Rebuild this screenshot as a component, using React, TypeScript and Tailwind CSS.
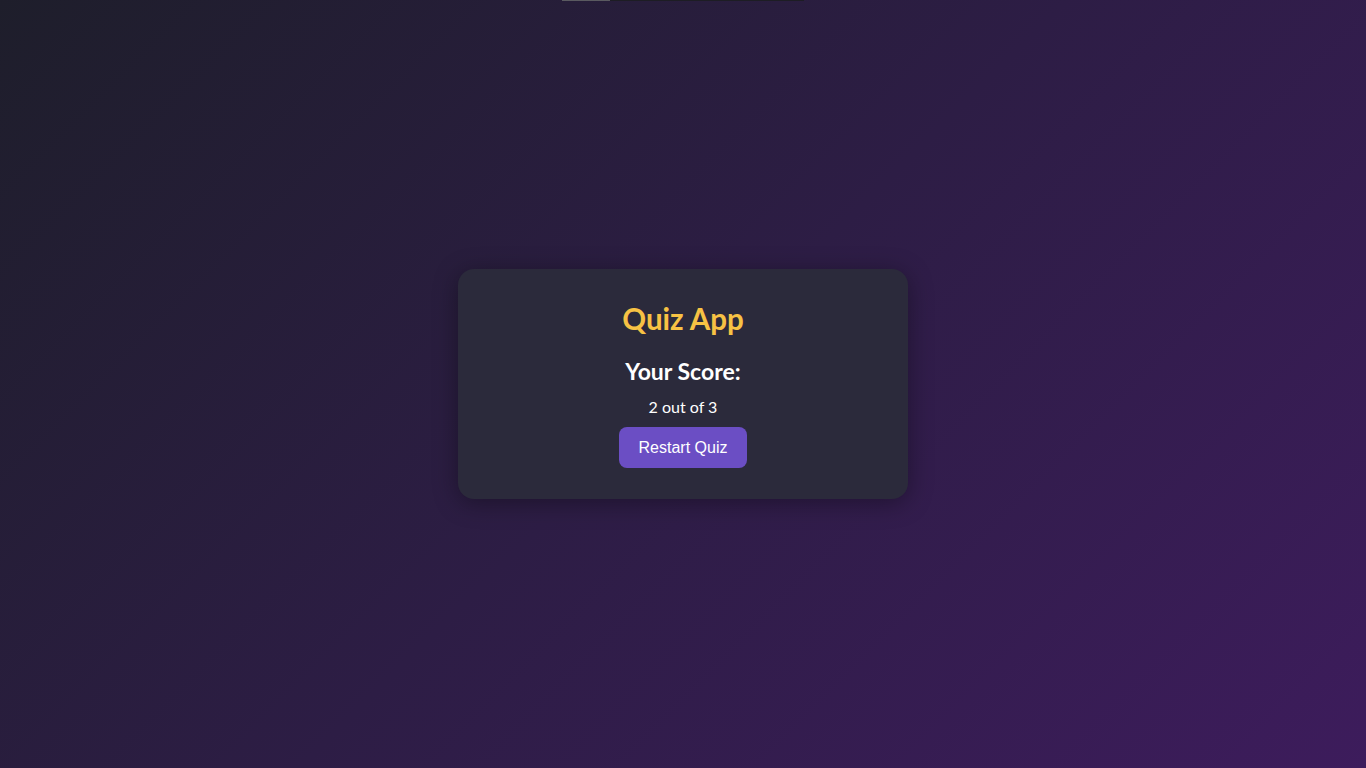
export default function App() {
  return (
    <div className="min-h-screen w-full bg-[linear-gradient(135deg,#1e1e2b_0%,#2d1d45_50%,#3d1c5c_100%)] flex flex-col font-['Segoe_UI','Lato','Noto_Sans',sans-serif]">
      <div className="w-full flex justify-center">
        <div className="w-[242px] h-px bg-[#1d1d24] flex">
          <div className="w-[48px] h-px bg-[#5a5a60]" />
        </div>
      </div>

      <div className="flex-1 -mt-px flex items-center justify-center">
        <div className="w-[450px] rounded-2xl bg-[#2b2a3b] shadow-[0_4px_24px_rgba(0,0,0,0.35)] px-8 pt-[29px] pb-[31px] flex flex-col items-center">
          <h1 className="text-[29.5px] leading-[42px] font-bold text-[#f7c244]">
            Quiz App
          </h1>
          <h2 className="mt-[15px] text-[23px] leading-[33px] font-bold text-white">
            Your Score:
          </h2>
          <p className="mt-[7px] text-base leading-6 text-white">2 out of 3</p>
          <button className="mt-2 h-[41px] px-5 rounded-lg bg-[#6b4ec4] text-white text-base font-['Liberation_Sans',Arial,sans-serif]">
            Restart Quiz
          </button>
        </div>
      </div>
    </div>
  );
}
